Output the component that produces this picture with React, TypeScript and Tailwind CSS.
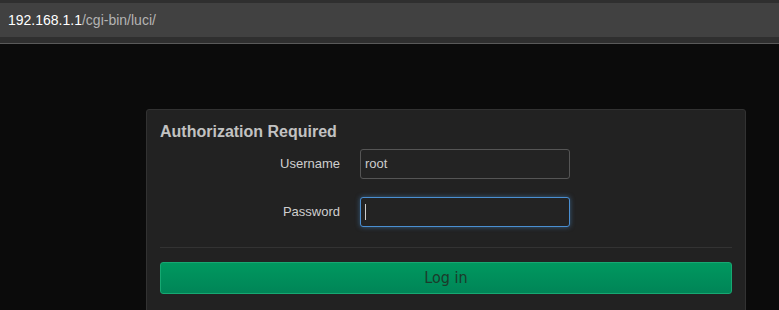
import React from 'react';

export default function App() {
  return (
    <div className="h-[310px] w-full overflow-hidden bg-[#0b0b0b] font-['Liberation_Sans',Arial,sans-serif]">
      {/* Browser address bar */}
      <div className="border-b border-[#5a5a5a] bg-[#2f2f2f] pt-[3px] pb-[6px]">
        <div className="flex h-[34px] items-center bg-[#414141] pl-2 text-[14px]">
          <span className="text-white">192.168.1.1</span>
          <span className="text-[#b4b4b4]">/cgi-bin/luci/</span>
        </div>
      </div>

      {/* Login card */}
      <div className="pt-[65px] pl-[146px]">
        <div className="w-[600px] rounded-[3px] border border-[#323232] bg-[#222222] px-[13px] pt-3 pb-6">
          <h2 className="text-[16px] leading-[20px] font-bold text-[#c2c2c2]">Authorization Required</h2>

          <div className="mt-[7px] flex items-center gap-5">
            <label className="w-[180px] text-right text-[13px] text-[#cfcfcf]">Username</label>
            <div className="flex h-[30px] w-[210px] items-center rounded-[3px] border border-[#555555] bg-[#232323] pl-1 text-[13px] text-[#cccccc]">
              root
            </div>
          </div>

          <div className="mt-[18px] flex items-center gap-5">
            <label className="w-[180px] text-right text-[13px] text-[#cfcfcf]">Password</label>
            <div className="flex h-[30px] w-[210px] items-center rounded-[3px] border border-[#4a8fd2] bg-[#232323] pl-1 shadow-[0_0_5px_rgba(74,143,210,0.55)]">
              <span className="h-4 w-px bg-[#cccccc]" />
            </div>
          </div>

          <div className="mt-[20px] h-px bg-[#333333]" />

          <button className="mt-[14px] flex h-[32px] w-full items-center justify-center rounded-[3px] border border-[#17a872] bg-gradient-to-b from-[#00985f] to-[#008557] font-['DejaVu_Sans_Condensed','DejaVu_Sans',sans-serif] [font-stretch:condensed] text-[16px] text-[#1c3a2b]">
            Log in
          </button>
        </div>
      </div>
    </div>
  );
}
